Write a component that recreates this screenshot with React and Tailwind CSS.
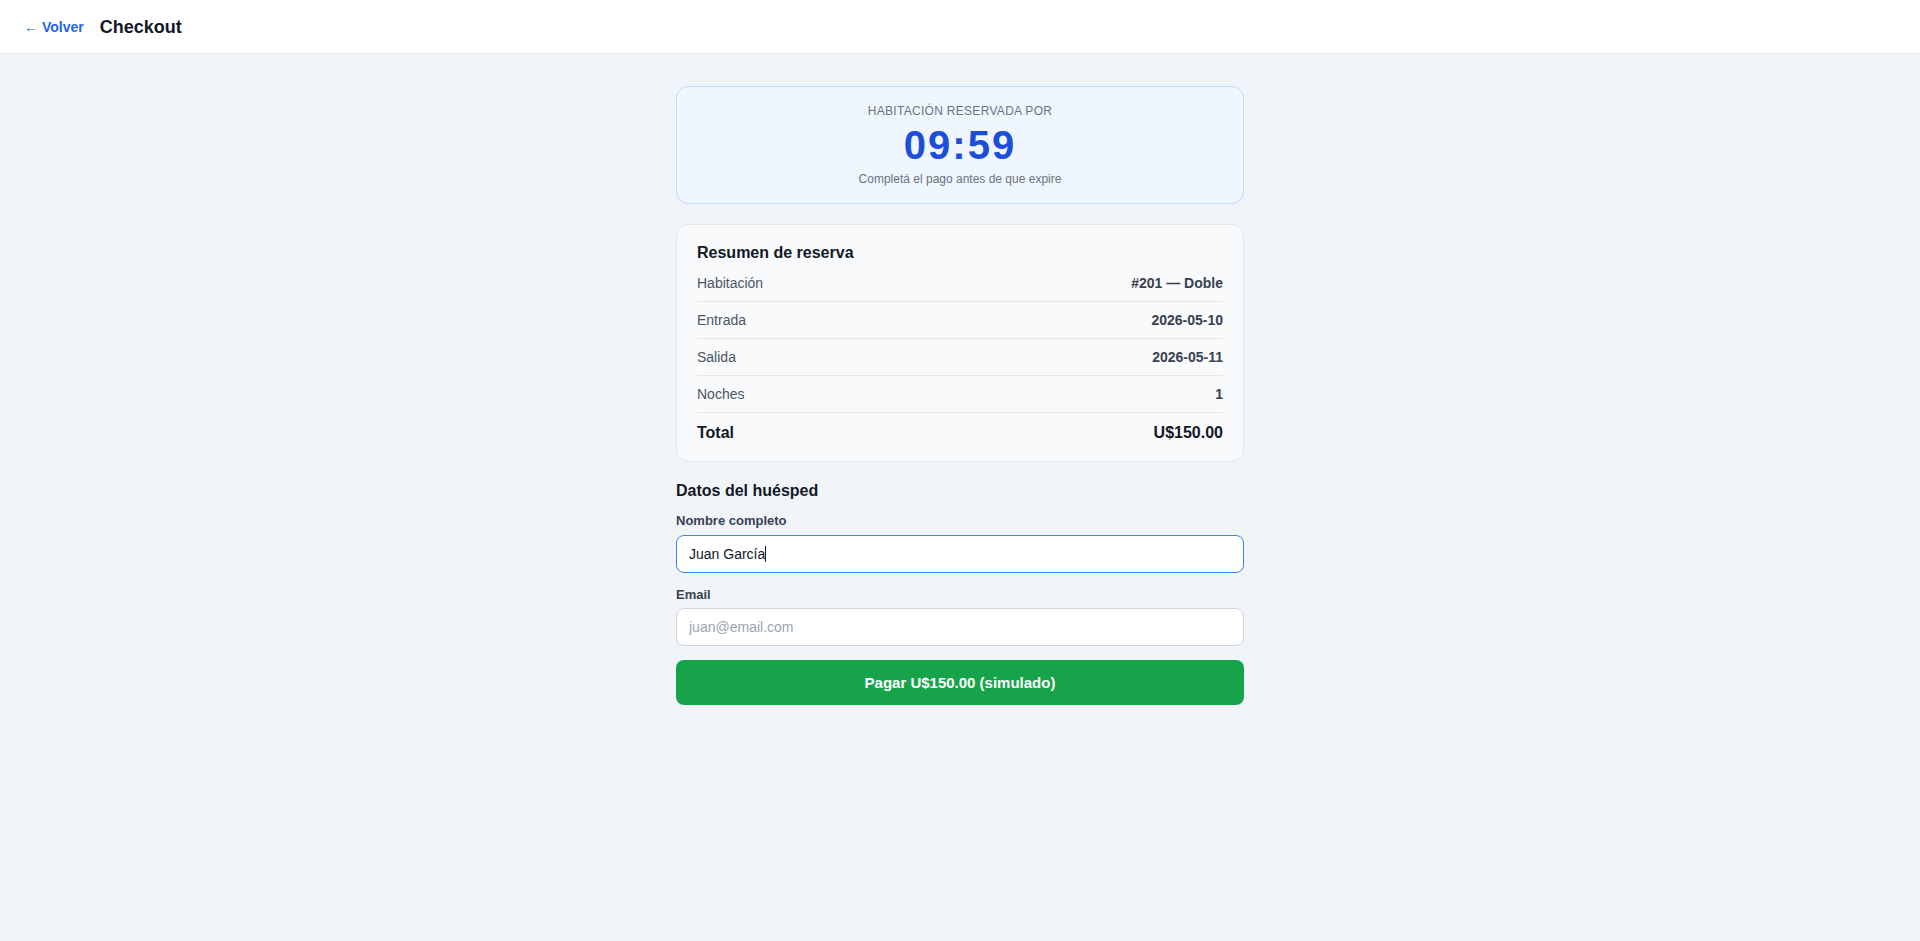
import React, { useState } from 'react';

const summaryRows = [
  { label: 'Habitación', value: '#201 — Doble' },
  { label: 'Entrada', value: '2026-05-10' },
  { label: 'Salida', value: '2026-05-11' },
  { label: 'Noches', value: '1' },
];

const App = () => {
  const [email, setEmail] = useState('');

  return (
    <div className="min-h-screen bg-[#f1f5f9] font-['Liberation_Sans',Arial,sans-serif] text-[#111827]">
      {/* Header */}
      <header className="h-[54px] bg-white border-b border-[#e5e7eb] flex items-center px-6 gap-4">
        <a href="#" className="text-sm font-semibold text-[#2563eb]">← Volver</a>
        <h1 className="text-lg font-bold text-[#111827]">Checkout</h1>
      </header>

      <main className="pt-8 pb-10">
        <div className="max-w-[568px] mx-auto">
          <div className="flex flex-col gap-5">
            {/* Timer */}
            <div className="bg-[#eff6ff] border border-[#bfdbfe] rounded-xl p-4 text-center">
              <p className="text-xs uppercase tracking-wide text-[#6b7280]">Habitación reservada por</p>
              <p className="mt-[6px] text-[40px] leading-10 font-bold tracking-wider text-[#1d4ed8]">09:59</p>
              <p className="mt-[6px] text-xs text-[#6b7280]">Completá el pago antes de que expire</p>
            </div>

            {/* Resumen */}
            <div className="bg-[#f8fafc] border border-[#e5e7eb] rounded-xl px-5 py-4">
              <h2 className="text-base font-bold text-[#111827]">Resumen de reserva</h2>
              {summaryRows.map((row) => (
                <div key={row.label} className="flex justify-between items-center py-2 border-b border-[#e5e7eb] text-sm">
                  <span className="text-[#4b5563]">{row.label}</span>
                  <span className="font-bold text-[#374151]">{row.value}</span>
                </div>
              ))}
              <div className="flex justify-between items-center pt-2 text-base font-bold text-[#111827]">
                <span>Total</span>
                <span>U$150.00</span>
              </div>
            </div>
          </div>

          {/* Datos del huésped */}
          <div className="mt-[17px]">
            <h2 className="text-base font-bold text-[#111827] mb-2">Datos del huésped</h2>
            <label className="block text-[13px] font-bold text-[#374151] mb-1">Nombre completo</label>
            <div className="w-full bg-white border border-[#3b82f6] rounded-lg px-3 py-2 text-sm text-[#111827] flex items-center">
              <span>Juan García</span>
              <span className="inline-block w-px h-4 bg-[#111827]" />
            </div>
            <label className="block mt-3 text-[13px] font-bold text-[#374151] mb-1">Email</label>
            <input
              value={email}
              onChange={(e) => setEmail(e.target.value)}
              placeholder="juan@email.com"
              className="w-full bg-white border border-[#d1d5db] rounded-lg px-3 py-2 text-sm text-[#111827] placeholder:text-[#9ca3af] outline-none"
            />
            <button className="mt-3.5 w-full bg-[#16a34a] rounded-lg py-3 text-[15px] leading-[21px] font-bold text-white">
              Pagar U$150.00 (simulado)
            </button>
          </div>
        </div>
      </main>
    </div>
  );
};

export default App;
